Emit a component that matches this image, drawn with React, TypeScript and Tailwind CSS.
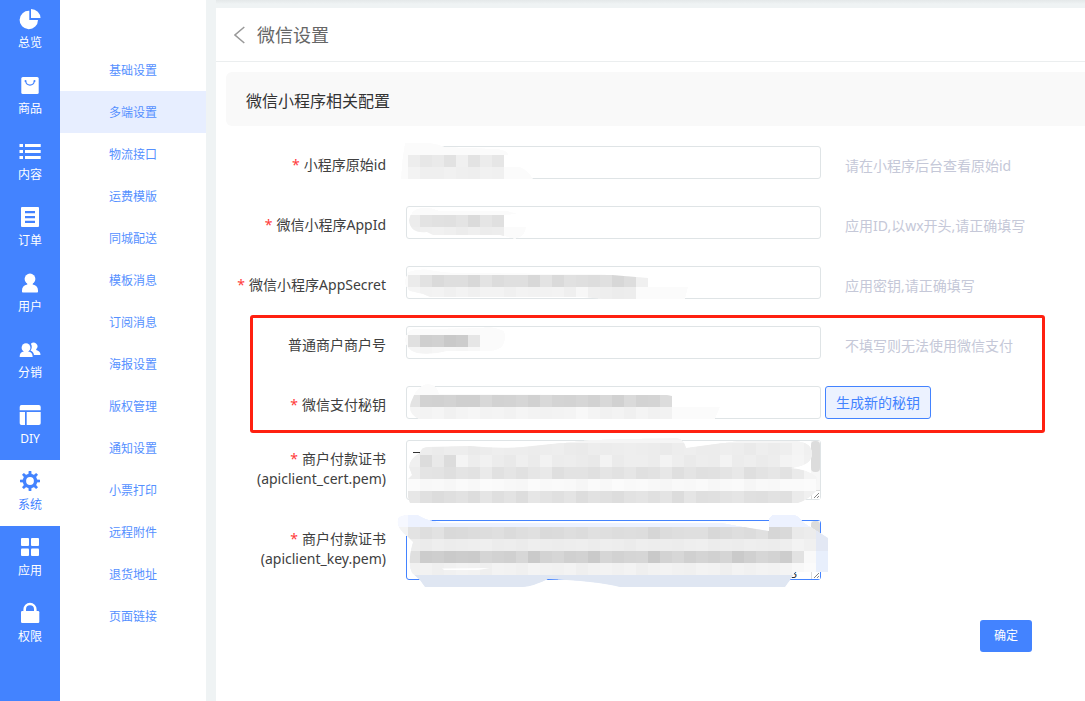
import React, { useId, useState } from 'react';

type MosaicRow = { x: number; y: number; shades: string };
type MosaicShape = { fill: string; blob: string; rows: MosaicRow[] };

type Field = {
    name: string;
    label: string;
    required?: boolean;
    hint?: string;
    mosaic: MosaicShape;
};

const CELL = 12;

const icons: Record<string, React.ReactNode> = {
    总览: (
        <>
            <path d="M11.3 3.8A9.2 9.2 0 1 0 20 13h-8.7z" />
            <path d="M13 2v9h9.5A9.5 9 0 0 0 13 2z" />
        </>
    ),
    商品: (
        <>
            <rect x="3.3" y="4" width="17.4" height="17" rx="1.5" />
            <path d="M7.6 8.2a4.5 5 0 0 0 8.8 0" className="fill-none stroke-[#4383ff]" strokeWidth="1.1" />
            <circle cx="7.5" cy="8" r="1" className="fill-[#4383ff]" />
            <circle cx="16.5" cy="8" r="1" className="fill-[#4383ff]" />
        </>
    ),
    内容: (
        <path d="M1.5 5H5v3H1.5zM7 5h15.7v3H7zM1.5 11H5v3H1.5zM7 11h15.7v3H7zM1.5 17H5v3H1.5zM7 17h15.7v3H7z" />
    ),
    订单: (
        <path
            fillRule="evenodd"
            d="M4 2h16a1 1 0 0 1 1 1v18a1 1 0 0 1-1 1H4a1 1 0 0 1-1-1V3a1 1 0 0 1 1-1zM7 6v2.2h10V6zM7 11v2.2h10V11zM7 15.8V18h10v-2.2z"
        />
    ),
    用户: (
        <>
            <circle cx="12" cy="8" r="5.4" />
            <path d="M9.3 11.5h5.4v2c3.5.6 5.3 2.6 5.3 6v1.2a.8.8 0 0 1-.8.8H4.8a.8.8 0 0 1-.8-.8v-1.2c0-3.4 1.8-5.4 5.3-6z" />
        </>
    ),
    分销: (
        <>
            <circle cx="8" cy="10.7" r="4.4" />
            <path d="M5.8 13.5h4.4v1c2.8.5 4.4 2.2 4.4 4.800v.7H1.700v-.7c0-2.600 1.400-4.300 4.100-4.800z" />
            <path d="M12.900 6.700a3.800 3.800 0 1 1 5.300 5.500v.9c2.700.6 4.300 2.200 4.300 5H16c-.3-2.300-1.400-3.700-3.500-4.500 1.600-2 1.700-4.700.4-6.900z" />
        </>
    ),
    DIY: (
        <path d="M3.500 2h17.200a2 2 0 0 1 2 2v3.300h-21V4a2 2 0 0 1 1.800-2zM1.700 9H7v13H3.500a1.800 1.800 0 0 1-1.800-1.800zM8.700 9h14v11.200a1.800 1.800 0 0 1-1.800 1.800H8.700z" />
    ),
    系统: (
        <>
            <circle cx="12" cy="12" r="5.6" className="fill-none stroke-current" strokeWidth="3.4" />
            {[0, 45, 90, 135, 180, 225, 270, 315].map(deg => (
                <path key={deg} d="M10.4 5.500l.3-3.500h2.600l.3 3.500z" transform={`rotate(${deg} 12 12)`} />
            ))}
        </>
    ),
    应用: (
        <>
            <rect x="3" y="3" width="8" height="8" rx="1" />
            <rect x="13" y="3" width="8" height="8" rx="1" />
            <rect x="3" y="13.5" width="8" height="7.5" rx="1" />
            <rect x="13" y="13.5" width="8" height="7.5" rx="1" />
        </>
    ),
    权限: (
        <>
            <rect x="3" y="10" width="18.3" height="12" rx="1.2" />
            <path d="M6.7 11V8.3a5.300 5.300 0 0 1 10.600 0V11" className="fill-none stroke-current" strokeWidth="2.6" />
        </>
    ),
};

const mainMenu = ['总览', '商品', '内容', '订单', '用户', '分销', 'DIY', '系统', '应用', '权限'];

const subMenu = [
    '基础设置', '多端设置', '物流接口', '运费模版', '同城配送', '模板消息', '订阅消息',
    '海报设置', '版权管理', '通知设置', '小票打印', '远程附件', '退货地址', '页面链接',
];

const basicFields: Field[] = [
    {
        name: 'originId',
        label: '小程序原始id',
        required: true,
        hint: '请在小程序后台查看原始id',
        mosaic: {
            fill: '#fbfbfb',
            blob: 'M-1-3H24Q32-2 39 1L92 3Q103 5 102 9H98V21H114Q123 25 127 33H-5Q-4 12-1-3z',
            rows: [
                { x: 2, y: 9, shades: 'ed e7 ea e2 f0 e3 ec e6' },
                { x: 2, y: 21, shades: 'f3 ef ef f1 ef ee f1 f0' },
            ],
        },
    },
    {
        name: 'appId',
        label: '微信小程序AppId',
        required: true,
        hint: '应用ID,以wx开头,请正确填写',
        mosaic: {
            fill: '#fbfbfb',
            blob: 'M3 14Q5 3 15 2T34 5H101L112 8L98 9V21H120Q120 30 109 33L94 29H27L21 26Q4 28 3 14z',
            rows: [
                { x: 2, y: 9, shades: 'ec e3 e1 e0 e4 db e5 e0' },
                { x: 2, y: 21, shades: 'ee f0 f1 ef ec ef ec ed' },
            ],
        },
    },
    {
        name: 'appSecret',
        label: '微信小程序AppSecret',
        required: true,
        hint: '应用密钥,请正确填写',
        mosaic: {
            fill: '#fbfbfb',
            blob: 'M-1 14L2 6Q14 2 24 4T51 7L194 8L230 11L242 12V21H282L279 33H197L177 31H24L17 28L4 25Q-2 20-1 14z',
            rows: [
                { x: 2, y: 9, shades: 'eb e2 da de de d8 e3 dc df df d8 e3 da e1 df dd e0 d7 dd f0' },
                { x: 2, y: 21, shades: 'f5 f2 f3 f0 f3 f0 f3 f3 f0 f3 f2 f2 f3 ef f7 ef ee ec ed fb' },
            ],
        },
    },
];

const payFields: Field[] = [
    {
        name: 'mchId',
        label: '普通商户商户号',
        hint: '不填写则无法使用微信支付',
        mosaic: {
            fill: '#fbfbfb',
            blob: 'M-1 14Q0 4 8 3L76 2Q84-1 98 5Q101 14 96 21Q90 25 84 25H41Q26 29 11 27Q0 24-1 14z',
            rows: [
                { x: 2, y: 9, shades: 'e0 cf d1 c9 cc e6' },
                { x: 2, y: 21, shades: 'f5 f4 f6 f7 f6 f8' },
            ],
        },
    },
    {
        name: 'payKey',
        label: '微信支付秘钥',
        required: true,
        mosaic: {
            fill: '#fbfbfb',
            blob: 'M5 16L9 7Q15-2 22-2Q31-2 33 8L261 9L266 10V21H314L309 33H13Q1 28 5 16z',
            rows: [
                { x: 2, y: 9, shades: 'e3 d2 d1 d3 cf cf d8 d2 d3 d6 d1 d9 d4 d3 d6 d2 d8 d1 da d3 d4 dc' },
                { x: 2, y: 21, shades: 'f4 f3 f5 f1 f4 f6 f3 f4 f2 f5 f3 f2 f3 f4 f8 f4 f1 f3 f0 f4 f1 f2' },
            ],
        },
    },
];

const certMosaic: MosaicShape = {
    fill: '#f5f5f5',
    blob: 'M14 13Q15 7 22 7L64 6Q92 9 117 7L174 1Q184-1 271-2Q278-1 280 8L331 1L391 1Q407 3 406 15Q405 26 384 28Q401 29 411 37L410 51Q402 60 392 63H4L2 57V39L6 35L3 27Q4 18 14 13z',
    rows: [
        { x: 2, y: 3, shades: 'ee ed eb ed ed ea ec ee ed ed ec ed ee eb ea ed ec ed ee ed ec ea ed ee ec ec ee ed ea ee ec ee f4 f0' },
        { x: 2, y: 15, shades: 'f0 dc e9 dc f4 ed f1 ec e9 ef eb f2 ec ed eb e9 f3 eb ee ee ec f3 ee ea ed ec f3 ec ee eb ed f3 f5 f1' },
        { x: 2, y: 27, shades: 'ed e4 e3 df e4 e2 ea e1 e5 e1 e6 e9 df e3 e3 e0 e5 e2 e6 e0 e2 e7 df e4 e0 e1 e4 e8 df e3 e6 e2 ea f4' },
        { x: 2, y: 39, shades: 'fb f8 f9 f7 fa f8 fb fa f8 f7 fb f9 fa f9 f6 fa f8 fb f9 fa f8 f6 f9 f8 fa f7 f9 fa f6 f9 f8 fa fa fb' },
        { x: 2, y: 51, shades: 'e7 e0 dc df e2 dd e5 df e3 dd e6 e3 e0 e4 dd e2 e0 dd e2 e4 e0 e4 dc e5 df e0 e3 e5 e0 df e2 e0 eb f0' },
    ],
};

const keyMosaic: MosaicShape = {
    fill: '#edf2ff',
    blob: 'M-1-5H12Q20 0 29 1Q33 3 40 3L317 3L344 8L363 11V-2L366-5H389Q393-4 397 2L422 18V52H389L384 60L379 67H214Q190 61 142 59Q128 66 117 67H19L14 60L6 53Q1 43 7 22L2 17Q-12 6-7-3z',
    rows: [
        { x: -10, y: 7, shades: 'f3 e3 de e2 d9 da dc dd df db de e0 da db de dc e0 df dd de dd d6 dc de df df d8 db de dc e0 d6 d9 ea ec' },
        { x: 2, y: 19, shades: 'ed eb ee ec ed ee ef ec ed eb ee ed ec ed ee ec ee ed eb ee ed ed ec ee ef ec ed ec ee ed ec ee f3 f0' },
        { x: 2, y: 31, shades: 'df cc ce ca cc cb d5 d2 d0 d7 ca d3 d6 d0 d2 ca d6 d2 d5 d6 c9 d3 d7 d0 d4 d1 d5 ca d0 d6 d3 cd e2 f9' },
        { x: 2, y: 43, shades: 'f1 f2 ef f1 f3 f2 ef f3 f2 f0 f4 f2 f1 f3 ef f2 f3 f1 f3 ef f2 f3 f1 f0 f3 f2 ef f3 f1 f3 f2 f4 f8 fb' },
    ],
};

const Mosaic: React.FC<{ shape: MosaicShape; children?: React.ReactNode }> = ({ shape, children }) => {
    const clipId = useId();

    return (
        <svg className="absolute inset-0 w-full h-full overflow-visible pointer-events-none" aria-hidden="true">
            <clipPath id={clipId}>
                <path d={shape.blob} />
            </clipPath>
            <g clipPath={`url(#${clipId})`} shapeRendering="crispEdges">
                <path d={shape.blob} fill={shape.fill} />
                {children}
                {shape.rows.map(row =>
                    row.shades.split(' ').map((s, i) => (
                        <rect
                            key={`${row.y}-${i}`}
                            x={row.x + i * CELL}
                            y={row.y}
                            width={CELL}
                            height={CELL}
                            fill={`#${s}${s}${s}`}
                        />
                    ))
                )}
            </g>
        </svg>
    );
};

const ScrollGrip: React.FC<{ thumb: number }> = ({ thumb }) => (
    <svg className="absolute right-px top-px w-[9px] h-[58px] pointer-events-none" viewBox="0 0 9 58" aria-hidden="true">
        <rect width="9" height="58" fill="#f7f7f7" />
        <rect width="9" height={thumb} rx="4" fill="#dcdcdc" />
        <rect y="49" width="9" height="9" fill="#fff" />
        <path d="M0 49.5h9M.5 49v9" stroke="#dcdcdc" />
        <path d="M3 57l5-5M6 57l2-2" stroke="#555" strokeDasharray="1 .5" />
    </svg>
);

const FieldLabel: React.FC<{ htmlFor: string; required?: boolean; children: React.ReactNode }> = ({
    htmlFor,
    required,
    children,
}) => (
    <label htmlFor={htmlFor} className="w-[170px] shrink-0 pt-[9px] text-right text-sm leading-5 text-[#404040]">
        {required && <span className="mr-1 text-[#ff3b3b]">*</span>}
        {children}
    </label>
);

const InputRow: React.FC<{ field: Field; children?: React.ReactNode }> = ({ field, children }) => (
    <div className="flex items-start">
        <FieldLabel htmlFor={field.name} required={field.required}>{field.label}</FieldLabel>
        <div className="relative ml-5 w-[415px]">
            <input
                id={field.name}
                name={field.name}
                type="text"
                className="block w-full h-[33px] px-2 rounded-[3px] border border-[#dfe4e6] bg-white text-sm focus:outline-none focus:border-[#4383ff]"
            />
            <Mosaic shape={field.mosaic} />
        </div>
        {field.hint && <p className="ml-6 pt-2.5 text-sm leading-5 text-[#c5c8d8]">{field.hint}</p>}
        {children}
    </div>
);

const App: React.FC = () => {
    const [activeMain, setActiveMain] = useState('系统');
    const [activeSub, setActiveSub] = useState('多端设置');

    const handleSubmit = (e: React.FormEvent) => {
        e.preventDefault();
    };

    return (
        <div className="flex min-h-screen bg-[#eff3f4] font-['Noto_Sans','Noto_Sans_CJK_SC',sans-serif]">
            <nav className="w-[60px] shrink-0 bg-[#4383ff]">
                {mainMenu.map(item => (
                    <a
                        key={item}
                        href="#"
                        onClick={() => setActiveMain(item)}
                        className={`flex h-[66px] first:h-16 flex-col items-center justify-end gap-[3px] pb-3 ${
                            item === activeMain ? 'bg-white text-[#4383ff]' : 'text-white'
                        }`}
                    >
                        <svg className="w-6 h-6 fill-current" viewBox="0 0 24 24" aria-hidden="true">
                            {icons[item]}
                        </svg>
                        <span className="text-xs leading-[18px]">{item}</span>
                    </a>
                ))}
            </nav>

            <nav className="w-[146px] shrink-0 bg-white pt-[49px]">
                {subMenu.map(item => (
                    <a
                        key={item}
                        href="#"
                        onClick={() => setActiveSub(item)}
                        className={`block h-[42px] text-center text-xs leading-[44px] text-[#5590ff] ${
                            item === activeSub ? 'bg-[#e7eeff]' : ''
                        }`}
                    >
                        {item}
                    </a>
                ))}
            </nav>

            <div className="ml-2.5 flex min-w-0 flex-1 flex-col">
                <div className="h-2 shrink-0 bg-linear-to-b from-[#e4e8e9] to-[#eff3f4] to-50%" />
                <main className="flex-1 bg-white">
                    <header className="flex h-[54px] items-center gap-3 border-b border-[#ebeeef] px-[18px]">
                        <button type="button" aria-label="返回" className="block">
                            <svg className="w-[11px] h-[18px]" viewBox="0 0 11 18" fill="none" stroke="#999" strokeWidth="1.5">
                                <path d="M10.3 1L1 9l9.3 8" />
                            </svg>
                        </button>
                        <h1 className="text-lg leading-6 text-[#666]">微信设置</h1>
                    </header>

                    <form onSubmit={handleSubmit} className="pt-2.5">
                        <h2 className="ml-2.5 rounded-l-md bg-[#f9f9f9] pt-1 pl-5 text-base leading-[50px] text-[#333]">
                            微信小程序相关配置
                        </h2>

                        <div className="mt-5 flex flex-col gap-[27px]">
                            {basicFields.map(f => <InputRow key={f.name} field={f} />)}
                        </div>

                        <div className="relative mt-[27px] flex flex-col gap-[27px]">
                            {payFields.map(f => (
                                <InputRow key={f.name} field={f}>
                                    {f.name === 'payKey' && (
                                        <button
                                            type="button"
                                            className="ml-1 h-[33px] w-[106px] shrink-0 rounded-[3px] border border-[#4383ff] bg-[#ecf2ff] text-sm text-[#4383ff]"
                                        >
                                            生成新的秘钥
                                        </button>
                                    )}
                                </InputRow>
                            ))}
                            <div className="absolute -top-[11px] -bottom-3.5 left-[34px] right-10 rounded-[3px] border-3 border-[#ff2010] pointer-events-none" />
                        </div>

                        <div className="mt-[21px] flex flex-col gap-5">
                            <div className="flex items-start">
                                <FieldLabel htmlFor="cert" required>
                                    商户付款证书<br />(apiclient_cert.pem)
                                </FieldLabel>
                                <div className="relative ml-5 w-[415px]">
                                    <textarea
                                        id="cert"
                                        name="cert"
                                        className="block w-full h-[60px] resize-none rounded-[3px] border border-[#dfe4e6] bg-white px-2 text-sm focus:outline-none"
                                    />
                                    <ScrollGrip thumb={31} />
                                    <svg className="absolute left-[7px] top-3 w-2 h-1" viewBox="0 0 8 4" aria-hidden="true">
                                        <path d="M0 .5h7v1.5" fill="none" stroke="#333" />
                                    </svg>
                                    <Mosaic shape={certMosaic} />
                                </div>
                            </div>

                            <div className="flex items-start">
                                <FieldLabel htmlFor="key" required>
                                    商户付款证书<br />(apiclient_key.pem)
                                </FieldLabel>
                                <div className="relative ml-5 w-[415px]">
                                    <textarea
                                        id="key"
                                        name="key"
                                        className="block w-full h-[60px] resize-none rounded-[3px] border border-[#4383ff] bg-white px-2 text-sm focus:outline-none"
                                    />
                                    <ScrollGrip thumb={31} />
                                    <span className="absolute right-6 bottom-0 text-xs leading-3 text-[#333]" aria-hidden="true">3</span>
                                    <Mosaic shape={keyMosaic}>
                                        <rect x="-10" y="-5" width="12" height="24" fill="#f6f8ff" />
                                        <rect x="410" y="7" width="12" height="24" fill="#e3e8f4" />
                                        <rect x="410" y="31" width="12" height="24" fill="#e8effc" />
                                        <rect x="2" y="55" width="390" height="12" fill="#dfe6f2" />
                                    </Mosaic>
                                    <svg className="absolute left-9 top-12 w-12 h-0.5" viewBox="0 0 48 2" aria-hidden="true">
                                        <path d="M0 .5L48 0L36 2H2z" fill="#fff" />
                                    </svg>
                                </div>
                            </div>
                        </div>

                        <div className="mt-10 mr-[53px] flex justify-end">
                            <button type="submit" className="h-8 w-[52px] rounded-[3px] bg-[#4383ff] text-xs text-white">
                                确定
                            </button>
                        </div>
                    </form>
                </main>
            </div>
        </div>
    );
};

export default App;
